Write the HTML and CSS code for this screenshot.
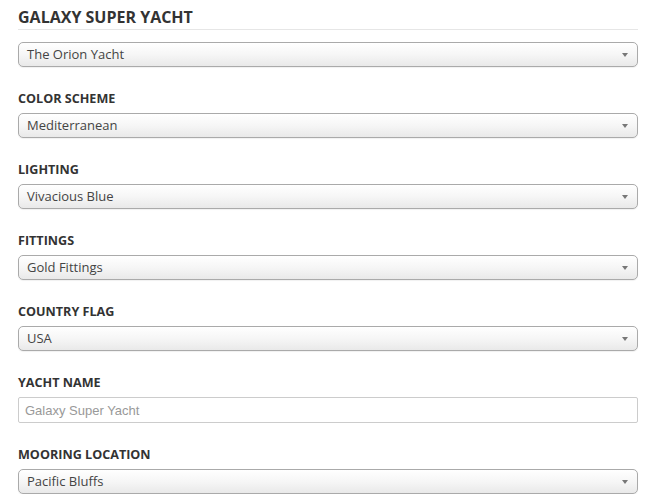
FILE: index.html
```html
<!DOCTYPE html>
<html>
<head>
<meta charset="utf-8">
<link rel="stylesheet" href="styles.css">
</head>
<body>
<div class="form">
  <h1 class="title">GALAXY SUPER YACHT</h1>
  <div class="select"><span>The Orion Yacht</span><i class="arrow"></i></div>

  <div class="label">COLOR SCHEME</div>
  <div class="select"><span>Mediterranean</span><i class="arrow"></i></div>

  <div class="label">LIGHTING</div>
  <div class="select"><span>Vivacious Blue</span><i class="arrow"></i></div>

  <div class="label">FITTINGS</div>
  <div class="select"><span>Gold Fittings</span><i class="arrow"></i></div>

  <div class="label">COUNTRY FLAG</div>
  <div class="select"><span>USA</span><i class="arrow"></i></div>

  <div class="label">YACHT NAME</div>
  <input class="text" type="text" placeholder="Galaxy Super Yacht">

  <div class="label">MOORING LOCATION</div>
  <div class="select"><span>Pacific Bluffs</span><i class="arrow"></i></div>
</div>
</body>
</html>
```

FILE: styles.css
```css
html, body {
  margin: 0;
  padding: 0;
  background: #fff;
}
.form {
  width: 620px;
  margin-left: 18px;
  padding-top: 7px;
  font-family: "Open Sans", "Liberation Sans", sans-serif;
  color: #333;
}
.title {
  margin: 0 0 12px 0;
  font-size: 16px;
  line-height: 20px;
  font-weight: 700;
  color: #333;
  padding-bottom: 2px;
  border-bottom: 1px solid #e6e6e6;
}
.label {
  margin-top: 24px;
  margin-bottom: 6px;
  font-size: 12.6px;
  line-height: 16px;
  font-weight: 700;
  color: #333;
}
.select {
  box-sizing: border-box;
  height: 25px;
  display: flex;
  align-items: center;
  justify-content: space-between;
  padding: 0 9px 0 8px;
  border: 1px solid #aaa;
  border-radius: 5px;
  background: linear-gradient(to bottom, #ffffff 0%, #f6f6f6 50%, #e9e9e9 100%);
  box-shadow: 0 1px 1px rgba(0,0,0,0.06);
  font-size: 13px;
  color: #444;
}
.select span {
  line-height: 17px;
}
.arrow {
  width: 0;
  height: 0;
  border-left: 3.5px solid transparent;
  border-right: 3.5px solid transparent;
  border-top: 4px solid #777;
}
.text {
  display: block;
  box-sizing: border-box;
  width: 620px;
  height: 26px;
  margin: 0;
  padding: 0 6px;
  border: 1px solid #ccc;
  border-radius: 2px;
  font-family: "Liberation Sans", Arial, sans-serif;
  font-size: 13px;
  color: #333;
  background: #fff;
  outline: none;
}
.text::placeholder {
  color: #999;
}
```
